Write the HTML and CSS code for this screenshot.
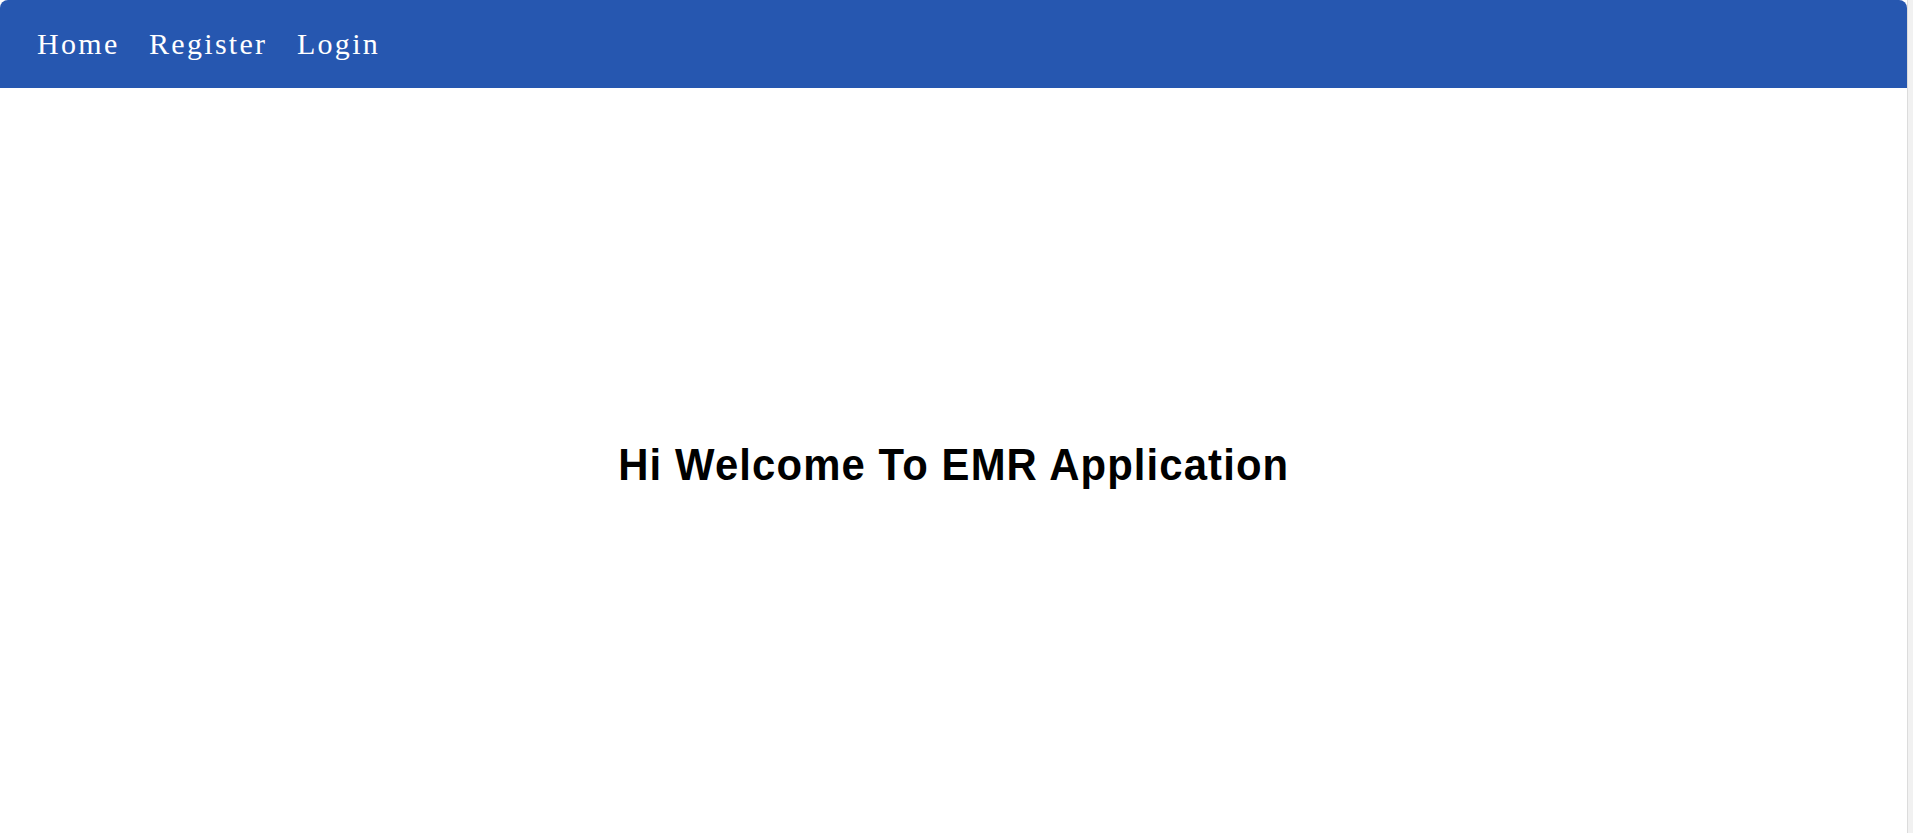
FILE: index.html
```html
<!DOCTYPE html>
<html>
<head>
<meta charset="utf-8">
<link rel="stylesheet" href="styles.css">
</head>
<body>
<div class="app">
  <nav class="navbar">
    <a class="nav-link" href="#">Home</a>
    <a class="nav-link" href="#">Register</a>
    <a class="nav-link" href="#">Login</a>
  </nav>
  <main class="content">
    <h1 class="welcome">Hi Welcome To EMR Application</h1>
  </main>
</div>
</body>
</html>
```
FILE: styles.css
```css
html, body {
  margin: 0;
  padding: 0;
  height: 100%;
}
body {
  background: #f1f1f1;
  overflow: hidden;
}
.app {
  width: 1908px;
  height: 100%;
  background: #ffffff;
  border-right: 1px solid #dcdcdc;
  box-sizing: border-box;
  display: flex;
  flex-direction: column;
}
.navbar {
  height: 88px;
  flex: none;
  background: #2657b0;
  border-radius: 8px 8px 0 0;
  display: flex;
  align-items: center;
  padding-left: 37px;
  gap: 29.5px;
  box-sizing: border-box;
}
.nav-link {
  font-family: "Liberation Serif", "Times New Roman", serif;
  font-size: 30px;
  letter-spacing: 2.3px;
  color: #ffffff;
  text-decoration: none;
}
.content {
  flex: 1;
  display: flex;
  align-items: center;
  justify-content: center;
}
.welcome {
  margin: 8px 0 0 0;
  font-family: "Liberation Sans", Arial, sans-serif;
  font-weight: bold;
  font-size: 45px;
  letter-spacing: 1.2px;
  transform: scaleX(0.93);
  color: #000000;
}
```
